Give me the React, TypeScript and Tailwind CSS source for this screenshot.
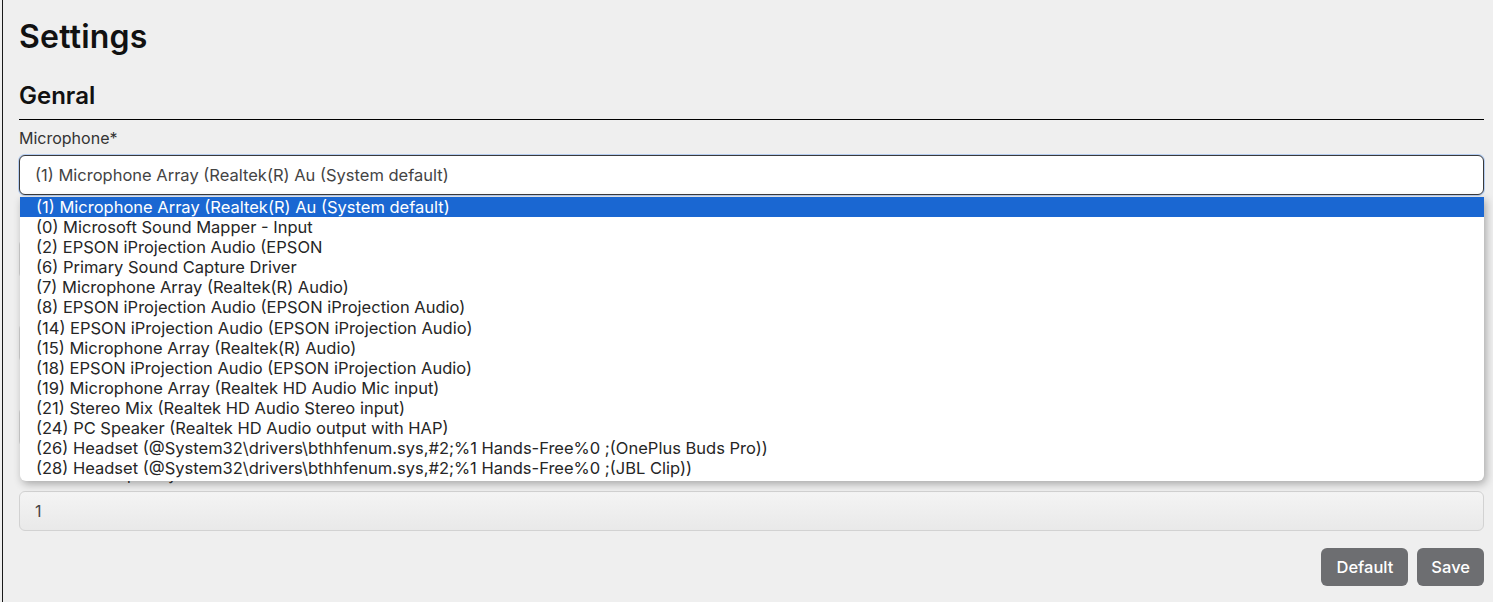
import React from 'react';

const devices = [
  '(1) Microphone Array (Realtek(R) Au (System default)',
  '(0) Microsoft Sound Mapper - Input',
  '(2) EPSON iProjection Audio (EPSON',
  '(6) Primary Sound Capture Driver',
  '(7) Microphone Array (Realtek(R) Audio)',
  '(8) EPSON iProjection Audio (EPSON iProjection Audio)',
  '(14) EPSON iProjection Audio (EPSON iProjection Audio)',
  '(15) Microphone Array (Realtek(R) Audio)',
  '(18) EPSON iProjection Audio (EPSON iProjection Audio)',
  '(19) Microphone Array (Realtek HD Audio Mic input)',
  '(21) Stereo Mix (Realtek HD Audio Stereo input)',
  '(24) PC Speaker (Realtek HD Audio output with HAP)',
  '(26) Headset (@System32\\drivers\\bthhfenum.sys,#2;%1 Hands-Free%0 ;(OnePlus Buds Pro))',
  '(28) Headset (@System32\\drivers\\bthhfenum.sys,#2;%1 Hands-Free%0 ;(JBL Clip))',
];

// fields covered by the open dropdown; only the last one peeks out
const hiddenFields = [
  { label: '', value: '' },
  { label: '', value: '' },
  { label: '', value: '' },
  { label: 'Frequency', value: '1' },
];

export default function App() {
  return (
    <div className="min-h-screen bg-[#efefef] font-['Inter',sans-serif] text-[#111]">
      <div className="ml-[2px] min-h-screen border-l border-[#1a1a1a] pl-4 pr-[9px]">
        <h1 className="pt-[18px] text-[32px] font-semibold leading-[38px] tracking-[0.2px]">Settings</h1>

        <h2 className="mt-[26px] text-[24px] font-semibold leading-[28px]">Genral</h2>
        <div className="mt-[9px] border-b border-black" />

        <div className="relative mt-[9px] flex flex-col gap-[18px]">
          {/* Microphone */}
          <div>
            <label className="block h-[26px] text-[16px] leading-[18px] text-[#333]">Microphone*</label>
            <div className="flex h-[40px] items-center rounded-[6px] border border-[#3a3a3a] bg-white px-[15px] text-[16.5px] text-[#444] shadow-[0_0_0_1px_rgba(140,180,240,0.6)]">
              {devices[0]}
            </div>
          </div>

          {hiddenFields.map((f, i) => (
            <div key={i}>
              <label className="block h-[26px] pl-[78px] text-[16px] leading-[18px] text-[#333]">{f.label}</label>
              <div className="flex h-[40px] items-center rounded-[6px] border border-[#d2d2d2] bg-gradient-to-b from-[#f4f4f4] to-[#e9e9e9] px-[15px] text-[16px] text-[#444]">
                {f.value}
              </div>
            </div>
          ))}

          {/* open select popup */}
          <ul className="absolute left-[1px] right-0 top-[68px] overflow-hidden rounded-b-[6px] bg-white pb-[3px] shadow-[2px_3px_8px_rgba(0,0,0,0.3)]">
            {devices.map((d, i) => (
              <li
                key={d}
                className={
                  i === 0
                    ? 'h-[20.1px] bg-[#1a67d2] pl-[16px] text-[16.5px] leading-[20px] text-white'
                    : 'h-[20.1px] pl-[16px] text-[16.5px] leading-[20px] text-[#262626]'
                }
              >
                {d}
              </li>
            ))}
          </ul>
        </div>

        <div className="mt-[17px] flex justify-end gap-[9px]">
          <button className="h-[38px] rounded-[6px] bg-[#6d6e71] px-[15px] text-[16.5px] font-medium text-white">Default</button>
          <button className="h-[38px] rounded-[6px] bg-[#6d6e71] px-[14px] text-[16.5px] font-medium text-white">Save</button>
        </div>
      </div>
    </div>
  );
}
